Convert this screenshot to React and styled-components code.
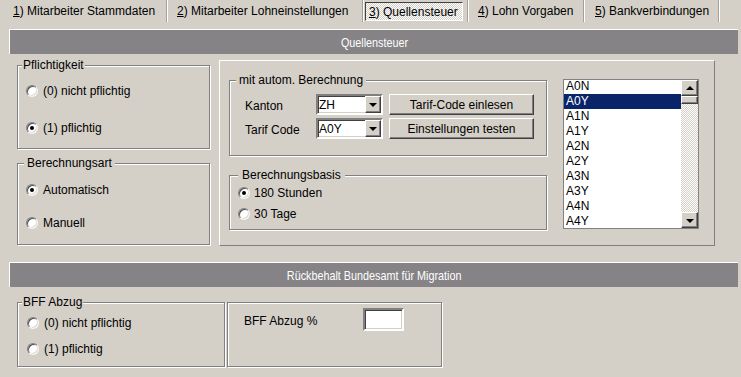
import React from 'react';
import styled, { createGlobalStyle } from 'styled-components';

const Global = createGlobalStyle`
  html, body { margin: 0; padding: 0; background: #d4d0c8; }
  body {
    font-family: "Liberation Sans", Arial, sans-serif;
    font-size: 12px;
    color: #000;
    width: 741px;
    height: 377px;
    overflow: hidden;
  }
`;

const dither = `
  background-color: #d4d0c8;
  background-image: conic-gradient(#ffffff 25%, #d4d0c8 0 50%, #ffffff 0 75%, #d4d0c8 0);
  background-size: 2px 2px;
`;

const raised = `
  border: 1px solid;
  border-color: #ffffff #404040 #404040 #ffffff;
  box-shadow: inset -1px -1px 0 #808080;
  background: #d4d0c8;
`;

const sunken = `
  border: 2px solid;
  border-color: #808080 #ffffff #ffffff #808080;
  box-shadow: inset 1px 1px 0 #404040, inset -1px -1px 0 #d4d0c8;
  background: #ffffff;
`;

const Window = styled.div`
  width: 741px;
  height: 377px;
  background: #d4d0c8;
`;

const TabBar = styled.div`
  display: flex;
  height: 22px;
`;

const Tab = styled.div`
  box-sizing: border-box;
  width: ${p => p.$w}px;
  height: 22px;
  padding-left: ${p => p.$pl}px;
  display: flex;
  align-items: center;
  border-right: 1px solid #a3a09a;
  box-shadow: 1px 0 0 #ffffff;
  white-space: nowrap;
`;

const ActiveTabLabel = styled.div`
  box-sizing: border-box;
  width: 98px;
  height: 19px;
  margin-top: 1px;
  padding-left: 3px;
  display: flex;
  align-items: center;
  border: 1px solid;
  border-color: #404040 #ffffff #ffffff #404040;
  ${dither}
`;

const Content = styled.div`
  padding: 0 3px 0 9px;
`;

const SectionHeader = styled.div`
  box-sizing: border-box;
  margin-top: ${p => p.$mt}px;
  height: 25px;
  border-top: 1px solid #ffffff;
  border-left: 1px solid #ffffff;
  background: #858385;
  color: #ffffff;
  display: flex;
  align-items: center;
  justify-content: center;
  font-size: 13px;
  padding-top: 1px;
`;

const HeaderText = styled.span`
  display: inline-block;
  transform: scaleX(0.83);
  white-space: nowrap;
`;

const Row = styled.div`
  display: flex;
  align-items: flex-start;
  margin-top: ${p => p.$mt}px;
`;

const LeftCol = styled.div`
  margin-left: 8px;
  padding-top: 5px;
  display: flex;
  flex-direction: column;
  gap: 14px;
`;

const GroupBox = styled.div`
  position: relative;
  box-sizing: border-box;
  width: ${p => p.$w}px;
  height: ${p => p.$h}px;
  margin-left: ${p => p.$ml || 0}px;
  border: 1px solid #808080;
  box-shadow: 1px 1px 0 #ffffff, inset 1px 1px 0 #ffffff;
  padding: ${p => p.$pad};
  flex-shrink: 0;
`;

const Caption = styled.span`
  position: absolute;
  top: -7px;
  left: ${p => p.$x}px;
  padding: 0 ${p => p.$px}px;
  line-height: 13px;
  background: #d4d0c8;
  white-space: nowrap;
`;

const RadioList = styled.div`
  display: flex;
  flex-direction: column;
  gap: ${p => p.$gap}px;
`;

const RadioRow = styled.label`
  display: flex;
  align-items: center;
  height: 16px;
  gap: ${p => p.$gap || 5}px;
  white-space: nowrap;
`;

const RadioCircle = styled.span`
  position: relative;
  box-sizing: border-box;
  width: 12px;
  height: 12px;
  border-radius: 50%;
  border: 1px solid;
  border-color: #808080 #f4f4f4 #f4f4f4 #808080;
  box-shadow: inset 1px 1px 0 #505050, inset -1px -1px 0 #dcdad4;
  background: #ffffff;
  flex-shrink: 0;
  &::after {
    content: '';
    display: ${p => (p.$on ? 'block' : 'none')};
    position: absolute;
    left: 3px;
    top: 3px;
    width: 4px;
    height: 4px;
    border-radius: 50%;
    background: #000;
  }
`;

const RightPanel = styled.div`
  box-sizing: border-box;
  margin-left: 9px;
  width: 496px;
  height: 186px;
  border: 1px solid;
  border-color: #ffffff #808080 #808080 #ffffff;
  padding: 18px 0 0 9px;
  display: flex;
  align-items: flex-start;
`;

const AutoCol = styled.div`
  margin-top: 1px;
  display: flex;
  flex-direction: column;
  gap: 19px;
`;

const FormRows = styled.div`
  display: flex;
  flex-direction: column;
  gap: 3px;
`;

const FormRow = styled.div`
  display: flex;
  align-items: center;
  height: 21px;
`;

const FieldLabel = styled.span`
  width: ${p => p.$w}px;
  flex-shrink: 0;
  white-space: nowrap;
  margin-top: ${p => p.$mt || 0}px;
`;

const Combo = styled.div`
  box-sizing: border-box;
  width: 67px;
  height: 21px;
  ${sunken}
  display: flex;
  align-items: center;
  justify-content: space-between;
  padding-left: 1px;
  margin-right: 6px;
`;

const DropButton = styled.div`
  box-sizing: border-box;
  width: 16px;
  height: 17px;
  ${raised}
  display: flex;
  align-items: center;
  justify-content: center;
`;

const Arrow = styled.span`
  width: 0;
  height: 0;
  border-left: 4px solid transparent;
  border-right: 4px solid transparent;
  ${p => (p.$up ? 'border-bottom: 4px solid #000;' : 'border-top: 4px solid #000;')}
  margin-top: ${p => (p.$up ? '-1px' : '1px')};
`;

const Button = styled.button`
  box-sizing: border-box;
  width: 145px;
  height: 21px;
  padding: 0;
  ${raised}
  font: inherit;
  color: #000;
  display: flex;
  align-items: center;
  justify-content: center;
`;

const ListBox = styled.div`
  box-sizing: border-box;
  margin-left: 16px;
  width: 136px;
  height: 150px;
  border: 1px solid #828282;
  background: #ffffff;
  display: flex;
`;

const ListItems = styled.div`
  flex: 1;
  overflow: hidden;
`;

const ListItem = styled.div`
  height: 15px;
  line-height: 15px;
  padding-left: 2px;
  background: ${p => (p.$sel ? '#0a246a' : 'transparent')};
  color: ${p => (p.$sel ? '#ffffff' : '#000')};
  &:first-child { margin-top: -1px; }
`;

const ScrollBar = styled.div`
  width: 17px;
  display: flex;
  flex-direction: column;
`;

const ScrollBtn = styled.div`
  box-sizing: border-box;
  height: ${p => p.$h}px;
  ${raised}
  display: flex;
  align-items: center;
  justify-content: center;
`;

const ScrollTrack = styled.div`
  flex: 1;
  ${dither}
`;

const TextInput = styled.div`
  box-sizing: border-box;
  width: 41px;
  height: 23px;
  ${sunken}
`;

const InlineRow = styled.div`
  display: flex;
  align-items: center;
`;

const codes = ['A0N', 'A0Y', 'A1N', 'A1Y', 'A2N', 'A2Y', 'A3N', 'A3Y', 'A4N', 'A4Y'];

const Radio = ({ on, label, gap }) => (
  <RadioRow $gap={gap}>
    <RadioCircle $on={on} />
    <span>{label}</span>
  </RadioRow>
);

export default function App() {
  return (
    <Window>
      <Global />
      <TabBar>
        <Tab $w={167} $pl={13}><span><u>1</u>) Mitarbeiter Stammdaten</span></Tab>
        <Tab $w={196} $pl={10}><span><u>2</u>) Mitarbeiter Lohneinstellungen</span></Tab>
        <Tab $w={105} $pl={2}>
          <ActiveTabLabel><span><u>3</u>) Quellensteuer</span></ActiveTabLabel>
        </Tab>
        <Tab $w={116} $pl={10}><span><u>4</u>) Lohn Vorgaben</span></Tab>
        <Tab $w={135} $pl={11}><span><u>5</u>) Bankverbindungen</span></Tab>
      </TabBar>

      <Content>
        <SectionHeader $mt={7}><HeaderText>Quellensteuer</HeaderText></SectionHeader>

        <Row $mt={6}>
          <LeftCol>
            <GroupBox $w={193} $h={84} $pad="17px 0 0 8px">
              <Caption $x={4} $px={1}>Pflichtigkeit</Caption>
              <RadioList $gap={21}>
                <Radio label="(0) nicht pflichtig" />
                <Radio on label="(1) pflichtig" />
              </RadioList>
            </GroupBox>
            <GroupBox $w={193} $h={82} $pad="18px 0 0 8px">
              <Caption $x={6} $px={3}>Berechnungsart</Caption>
              <RadioList $gap={17}>
                <Radio on label="Automatisch" />
                <Radio label="Manuell" />
              </RadioList>
            </GroupBox>
          </LeftCol>

          <RightPanel>
            <AutoCol>
              <GroupBox $w={318} $h={76} $pad="13px 0 0 15px">
                <Caption $x={6} $px={3}>mit autom. Berechnung</Caption>
                <FormRows>
                  <FormRow>
                    <FieldLabel $w={71} $mt={3}>Kanton</FieldLabel>
                    <Combo>
                      <span>ZH</span>
                      <DropButton><Arrow /></DropButton>
                    </Combo>
                    <Button>Tarif-Code einlesen</Button>
                  </FormRow>
                  <FormRow>
                    <FieldLabel $w={71} $mt={3}>Tarif Code</FieldLabel>
                    <Combo>
                      <span>A0Y</span>
                      <DropButton><Arrow /></DropButton>
                    </Combo>
                    <Button>Einstellungen testen</Button>
                  </FormRow>
                </FormRows>
              </GroupBox>
              <GroupBox $w={318} $h={55} $pad="9px 0 0 8px">
                <Caption $x={8} $px={4}>Berechnungsbasis</Caption>
                <RadioList $gap={5}>
                  <Radio on gap={4} label="180 Stunden" />
                  <Radio gap={4} label="30 Tage" />
                </RadioList>
              </GroupBox>
            </AutoCol>

            <ListBox>
              <ListItems>
                {codes.map(c => (
                  <ListItem key={c} $sel={c === 'A0Y'}>{c}</ListItem>
                ))}
              </ListItems>
              <ScrollBar>
                <ScrollBtn $h={16}><Arrow $up /></ScrollBtn>
                <ScrollBtn $h={8} />
                <ScrollTrack />
                <ScrollBtn $h={16}><Arrow /></ScrollBtn>
              </ScrollBar>
            </ListBox>
          </RightPanel>
        </Row>

        <SectionHeader $mt={16}><HeaderText>Rückbehalt Bundesamt für Migration</HeaderText></SectionHeader>

        <Row $mt={15}>
          <GroupBox $w={208} $h={65} $ml={8} $pad="12px 0 0 9px">
            <Caption $x={4} $px={1}>BFF Abzug</Caption>
            <RadioList $gap={10}>
              <Radio label="(0) nicht pflichtig" />
              <Radio label="(1) pflichtig" />
            </RadioList>
          </GroupBox>
          <GroupBox $w={215} $h={65} $ml={2} $pad="5px 0 0 16px">
            <InlineRow>
              <FieldLabel $w={119} $mt={2}>BFF Abzug %</FieldLabel>
              <TextInput />
            </InlineRow>
          </GroupBox>
        </Row>
      </Content>
    </Window>
  );
}
